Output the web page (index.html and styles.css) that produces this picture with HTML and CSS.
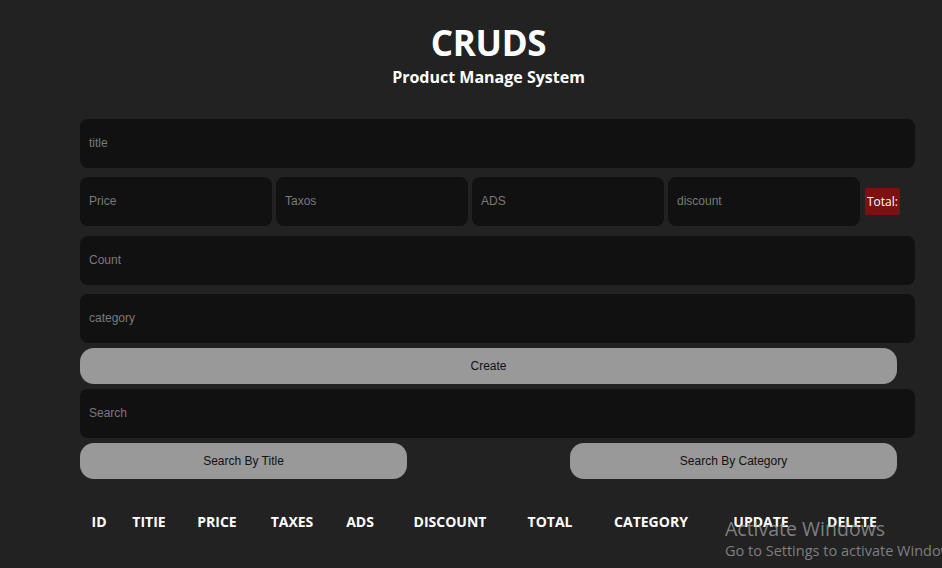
FILE: index.html
```html
<!DOCTYPE html>
<html>
<head>
<meta charset="utf-8">
<link rel="stylesheet" href="styles.css">
</head>
<body>
<div class="crud">
  <div class="head">
    <h2 class="logo">CRUDS</h2>
    <p class="sub">Product Manage System</p>
  </div>
  <div class="inputs">
    <input class="field" type="text" placeholder="title">
    <div class="price">
      <input class="field" type="text" placeholder="Price">
      <input class="field" type="text" placeholder="Taxos">
      <input class="field" type="text" placeholder="ADS">
      <input class="field" type="text" placeholder="discount">
      <small class="total">Total:</small>
    </div>
    <input class="field" type="text" placeholder="Count">
    <input class="field" type="text" placeholder="category">
    <button class="btn btn-create">Create</button>
  </div>
  <div class="search">
    <input class="field" type="text" placeholder="Search">
    <div class="search-btns">
      <button class="btn">Search By Title</button>
      <button class="btn">Search By Category</button>
    </div>
  </div>
  <div class="table-head">
    <span>ID</span>
    <span>TITIE</span>
    <span>PRICE</span>
    <span>TAXES</span>
    <span>ADS</span>
    <span>DISCOUNT</span>
    <span>TOTAL</span>
    <span>CATEGORY</span>
    <span>UPDATE</span>
    <span>DELETE</span>
  </div>
</div>
<div class="watermark">
  <div class="wm-title">Activate Windows</div>
  <div class="wm-sub">Go to Settings to activate Windows.</div>
</div>
</body>
</html>
```

FILE: styles.css
```css
html, body {
  margin: 0;
  padding: 0;
  background: #222222;
  height: 100%;
  overflow: hidden;
}
body {
  font-family: "Liberation Sans", Arial, sans-serif;
  color: #fff;
}
.crud {
  width: 817px;
  padding-left: 80px;
  padding-top: 22px;
}
.head {
  text-align: center;
  font-family: "Open Sans", "Noto Sans", sans-serif;
  font-weight: 700;
}
.logo {
  margin: 0;
  font-size: 35px;
  line-height: 42px;
  font-weight: 700;
  letter-spacing: -0.3px;
}
.sub {
  margin: 0;
  font-size: 16px;
  line-height: 24px;
  font-weight: 700;
  position: relative;
  top: 1px;
}
.inputs {
  margin-top: 31px;
  display: flex;
  flex-direction: column;
}
.field {
  box-sizing: border-box;
  width: 835px;
  height: 49px;
  margin: 0 0 9px 0;
  border: none;
  outline: none;
  border-radius: 8px;
  background: #111111;
  color: #ccc;
  padding: 0 9px 2px 9px;
  font-family: "Liberation Sans", Arial, sans-serif;
  font-size: 12px;
}
.field::placeholder {
  color: #7a7a7a;
}
.price {
  display: flex;
  align-items: center;
  gap: 4px;
}
.price .field {
  flex: 0 0 192px;
  width: 192px;
  margin: 0 0 10px 0;
}
.total {
  flex: 0 0 auto;
  margin: 0 0 10px 1px;
  background: #7d1111;
  color: #fff;
  font-family: "Open Sans", "Noto Sans", sans-serif;
  font-size: 12px;
  line-height: 17px;
  padding: 5px 2px;
  border-radius: 2px;
}
.btn {
  box-sizing: border-box;
  width: 817px;
  height: 36px;
  border: none;
  border-radius: 14px;
  background: #999999;
  color: #111;
  font-family: "Liberation Sans", Arial, sans-serif;
  font-size: 12px;
  cursor: pointer;
}
.inputs > .field:last-of-type {
  margin-bottom: 5px;
}
.btn-create {
  margin-bottom: 5px;
}
.search {
  display: flex;
  flex-direction: column;
}
.search .field {
  margin-bottom: 5px;
}
.search-btns {
  width: 817px;
  display: flex;
  justify-content: space-between;
}
.search-btns .btn {
  width: 327px;
}
.table-head {
  margin-top: 34px;
  display: grid;
  grid-template-columns: 38px 62px 74px 76px 60px 120px 80px 122px 98px 84px;
  font-family: "Open Sans", "Noto Sans", sans-serif;
  font-weight: 700;
  font-size: 14px;
  line-height: 18px;
  text-align: center;
}
.watermark {
  position: absolute;
  left: 725px;
  top: 516px;
  font-family: "Open Sans", "Noto Sans", sans-serif;
  white-space: nowrap;
  pointer-events: none;
}
.wm-title {
  font-size: 19.5px;
  line-height: 25px;
  color: rgba(160,160,160,0.75);
}
.wm-sub {
  font-size: 14.5px;
  line-height: 20px;
  color: rgba(160,160,160,0.75);
}
```
